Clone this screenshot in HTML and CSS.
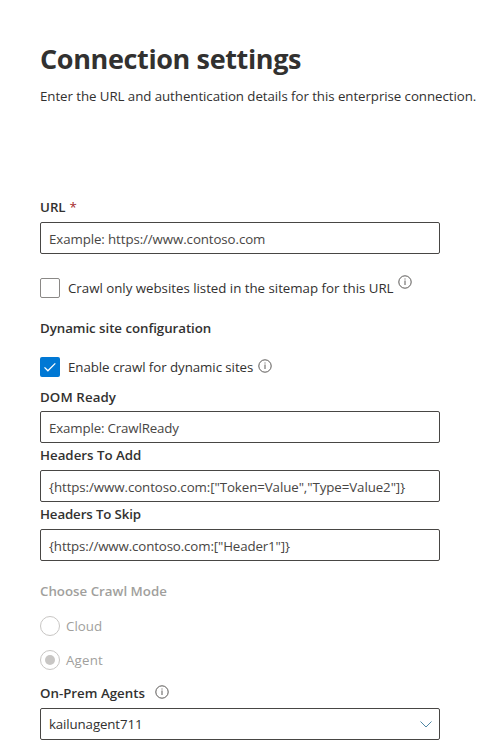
FILE: index.html
```html
<!DOCTYPE html>
<html lang="en">
<head>
<meta charset="utf-8">
<title>Connection settings</title>
<link rel="stylesheet" href="styles.css">
</head>
<body>
<svg class="defs" aria-hidden="true">
  <symbol id="info" viewBox="0 0 14 14"><circle cx="7" cy="7" r="6.2" fill="none" stroke="currentColor" stroke-width=".9"/><path d="M7 5.5V10M7 3.5v1" fill="none" stroke="currentColor" stroke-width=".9"/></symbol>
</svg>
<main class="panel">
  <h1 class="title">Connection settings</h1>
  <p class="intro">Enter the URL and authentication details for this enterprise connection.</p>
  <form>
    <div class="field">
      <div class="label">URL <span class="required">*</span></div>
      <div class="input"><span class="t-url">Example: https://www.contoso.com</span></div>
    </div>
    <div class="check sitemap">
      <span class="box"></span>
      <span class="t-sitemap">Crawl only websites listed in the sitemap for this URL</span>
      <svg class="info raised"><use href="#info"/></svg>
    </div>
    <div class="label section"><span class="t-dynamic">Dynamic site configuration</span></div>
    <div class="check">
      <span class="box checked"><svg viewBox="0 0 20 20"><path d="M4.5 10.4l3.4 3.4 7.4-7.4" fill="none" stroke="currentColor" stroke-width="1.3"/></svg></span>
      <span class="t-enable">Enable crawl for dynamic sites</span>
      <svg class="info"><use href="#info"/></svg>
    </div>
    <div class="field dom">
      <div class="label"><span class="t-dom">DOM Ready</span></div>
      <div class="input"><span class="t-ready">Example: CrawlReady</span></div>
    </div>
    <div class="field add">
      <div class="label"><span class="t-add">Headers To Add</span></div>
      <div class="input"><span class="t-token">{https:/www.contoso.com:["Token=Value","Type=Value2"]}</span></div>
    </div>
    <div class="field skip">
      <div class="label"><span class="t-skip">Headers To Skip</span></div>
      <div class="input"><span class="t-header">{https://www.contoso.com:["Header1"]}</span></div>
    </div>
    <div class="modes">
      <div class="label"><span class="t-mode">Choose Crawl Mode</span></div>
      <div class="radio"><span class="ring"></span><span class="t-cloud">Cloud</span></div>
      <div class="radio"><span class="ring selected"></span><span class="t-agent">Agent</span></div>
    </div>
    <div class="field agents">
      <div class="label"><span class="t-agents">On-Prem Agents</span><svg class="info"><use href="#info"/></svg></div>
      <div class="input select"><span class="t-value">kailunagent711</span><svg class="chevron" viewBox="0 0 12 7"><path d="M.5.5L6 6 11.5.5" fill="none" stroke="currentColor"/></svg></div>
    </div>
  </form>
</main>
</body>
</html>
```
FILE: styles.css
```css
* { box-sizing: border-box; }
body { margin: 0; background: #fff; color: #323130; font: 13.3px/20px "Open Sans", "Noto Sans", sans-serif; white-space: nowrap; overflow: hidden; }
.defs { position: absolute; width: 0; height: 0; }
.panel { width: 440px; padding: 40px 0 0 40px; }
.title { margin: 0; font-size: 27px; line-height: 38px; font-weight: 700; letter-spacing: -.37px; }
.intro { margin: 8px 0 91px; line-height: 20px; letter-spacing: -.065px; }
.label { display: flex; align-items: center; height: 20px; margin-bottom: 4px; font-weight: 600; }
.required { margin-left: 4px; color: #a4262c; font-weight: 400; }
.field .label { margin-bottom: 5px; }
.input { display: flex; align-items: center; height: 32px; padding: 2px 8px 0; border: 1px solid #484644; border-radius: 2px; color: #484644; }
.check { display: flex; align-items: center; height: 20px; }
.box { width: 20px; height: 20px; margin-right: 8px; border: 1px solid #8a8886; border-radius: 2px; flex: none; }
.box.checked { border: 0; background: #0078d4; color: #fff; }
.box svg { display: block; width: 20px; height: 20px; }
.info { width: 14px; height: 14px; margin: -3px 0 0 4.5px; color: #484644; flex: none; }
.info.raised { margin: -12px 0 0 4px; }
.sitemap { margin-top: 24px; }
.section { margin: 20px 0 19px; }
.dom { margin-top: 10px; }
.dom .label { margin-bottom: 4px; }
.add, .skip { margin-top: 2px; }
.modes { margin-top: 20px; color: #a19f9d; }
.modes .label { margin-bottom: 15px; }
.radio { display: flex; align-items: center; height: 20px; margin-bottom: 14px; }
.ring { display: flex; align-items: center; justify-content: center; width: 20px; height: 20px; margin-right: 6px; border: 1px solid #c8c6c4; border-radius: 50%; }
.selected::before { content: ""; width: 10px; height: 10px; border-radius: 50%; background: #c8c6c4; }
.agents { margin-top: -1px; }
.agents .info { margin-left: 10px; margin-top: -3px; }
.select { justify-content: space-between; padding: 0 7px 0 8px; color: #323130; }
.chevron { width: 12px; height: 7px; color: #4f88a5; }
.t-url { letter-spacing: -.1px; }
.t-sitemap { letter-spacing: -.02px; }
.t-dynamic { letter-spacing: -.05px; }
.t-enable { letter-spacing: -.06px; }
.t-dom { letter-spacing: .1px; }
.t-ready { letter-spacing: -.15px; }
.t-token { letter-spacing: -.08px; }
.t-skip, .t-header, .t-value { letter-spacing: -.13px; }
.t-agent { letter-spacing: .2px; }
```
